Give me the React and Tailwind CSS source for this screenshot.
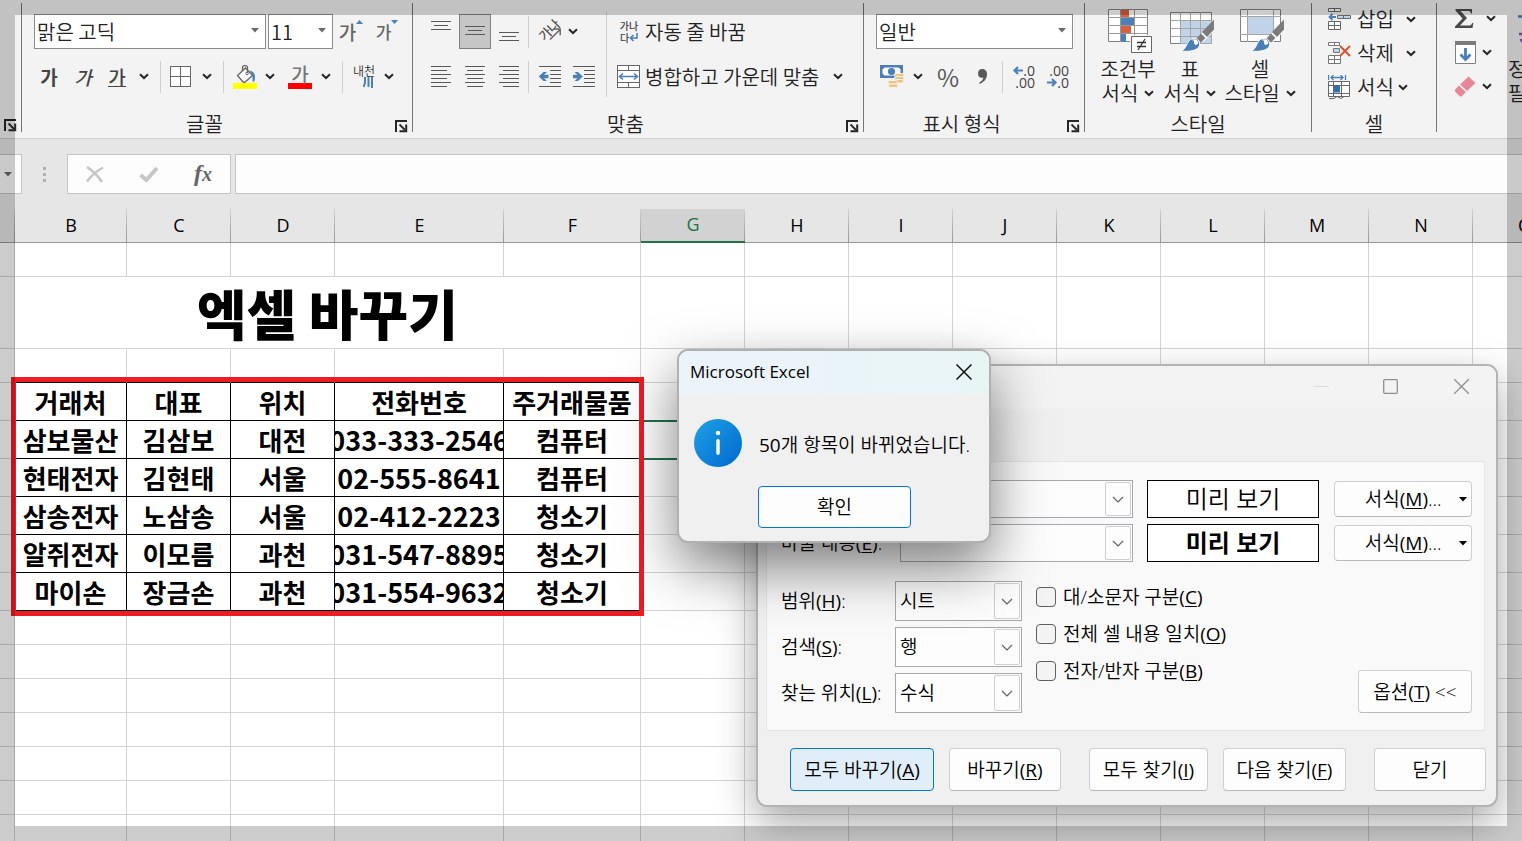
import { clsx } from 'clsx'

const COLUMNS = [
  { id: 'A', width: 'w-[15px]' },
  { id: 'B', width: 'w-[112px]' },
  { id: 'C', width: 'w-[104px]' },
  { id: 'D', width: 'w-[104px]' },
  { id: 'E', width: 'w-[169px]' },
  { id: 'F', width: 'w-[137px]' },
  ...['G', 'H', 'I', 'J', 'K', 'L', 'M', 'N', 'O', 'P'].map((id) => ({ id, width: 'w-[104px]' })),
]

const HEADINGS = ['거래처', '대표', '위치', '전화번호', '주거래물품']

const RECORDS = [
  ['삼보물산', '김삼보', '대전', '033-333-2546', '컴퓨터'],
  ['현태전자', '김현태', '서울', '02-555-8641', '컴퓨터'],
  ['삼송전자', '노삼송', '서울', '02-412-2223', '청소기'],
  ['알쥐전자', '이모름', '과천', '031-547-8895', '청소기'],
  ['마이손', '장금손', '과천', '031-554-9632', '청소기'],
]

/* ---------- small shared pieces ---------- */

function ChevronMark() {
  return (
    <svg className="shrink-0" width="10" height="7" viewBox="0 0 10 7" fill="none" stroke="#262626" strokeWidth="2">
      <path d="M1 1.200 5 5l4-3.800" />
    </svg>
  )
}

function Chevron() {
  return (
    <button aria-label="더 보기" className="flex w-5 shrink-0 justify-center">
      <ChevronMark />
    </button>
  )
}

function Tool({ label, className, children }) {
  return (
    <button aria-label={label} className={clsx('flex h-[35px] shrink-0 items-center justify-center', className)}>
      {children}
    </button>
  )
}

function Divider() {
  return (
    <div className="flex w-[13px] shrink-0 justify-center">
      <div className="h-8 w-px bg-[#cfcfcf]" />
    </div>
  )
}

function Combo({ label, value, className }) {
  return (
    <div className={clsx('relative h-[35px] shrink-0', className)}>
      <select
        aria-label={label}
        className="h-full w-full appearance-none border border-[#8c8c8c] bg-white pl-[2px] text-xl text-[#222]"
      >
        <option>{value}</option>
      </select>
      <svg className="pointer-events-none absolute top-[14px] right-[7px]" width="8" height="5" viewBox="0 0 8 5">
        <path d="M0 0h8L4 4.500z" fill="#6a6a6a" />
      </svg>
    </div>
  )
}

function Launcher() {
  return (
    <button aria-label="대화 상자 열기" className="flex shrink-0">
      <svg width="13" height="13" viewBox="0 0 13 13" fill="none" stroke="#262626">
        <path d="M1 12V1h11" strokeWidth="2" />
        <path d="M4.500 4.500 10 10" strokeWidth="1.800" />
        <path d="M11.200 4.500v6.800H4.500" strokeWidth="2" />
      </svg>
    </button>
  )
}

function Group({ title, launcher, className, children }) {
  return (
    <section className={clsx('flex h-[138px] shrink-0 flex-col', className)}>
      {children}
      <div className="mt-auto mb-[2px] flex h-6 items-center">
        <span className={clsx('flex-1 text-center leading-6', launcher && 'pr-2')}>{title}</span>
        {launcher && (
          <div className="mr-1 pt-1">
            <Launcher />
          </div>
        )}
      </div>
    </section>
  )
}

function GroupLine() {
  return <div className="mt-[3px] h-[129px] w-px shrink-0 bg-[#757575]" />
}

/* ---------- ribbon icons ---------- */

function Lines({ rows, width = 20, height = 22, align = 'left' }) {
  return (
    <svg width={width} height={height} viewBox={`0 0 ${width} ${height}`} stroke="#595959" shapeRendering="crispEdges">
      {rows.map(([y, w]) => {
        const x = align === 'left' ? 0 : align === 'right' ? width - w : (width - w) / 2
        return <line key={y} x1={x} x2={x + w} y1={y + 0.5} y2={y + 0.5} />
      })}
    </svg>
  )
}

const PARAGRAPH = [[0, 20], [4, 16], [8, 20], [12, 16], [16, 20], [20, 16]]

function IndentIcon({ inward }) {
  return (
    <svg width="22" height="22" viewBox="0 0 22 22" fill="none" stroke="#595959">
      <path d="M0 .5h22M11 4.500h11M11 8.500h11M11 12.500h11M11 16.500h11M0 20.500h22" shapeRendering="crispEdges" />
      {inward
        ? <path d="M0 8.800h4.500L1.500 6H5l4.800 4.500L5 15H1.500l3-2.800H0z" fill="#4a7fb8" stroke="none" />
        : <path d="M9.500 8.800H5L8 6H4.500L-.3 10.500 4.500 15H8l-3-2.800h4.500z" fill="#4a7fb8" stroke="none" />}
    </svg>
  )
}

function BordersIcon() {
  return (
    <svg width="21" height="21" viewBox="0 0 21 21" fill="#fff" stroke="#666" shapeRendering="crispEdges">
      <path d="M.5.5h20v20H.5zM10.500 0v21M0 10.500h21" />
    </svg>
  )
}

function FillIcon() {
  return (
    <svg width="24" height="24" viewBox="0 0 24 24" fill="none">
      <path d="M4.500 10.500 12.500 3l7 7.500-8.500 7.500z" fill="#fff" stroke="#666" strokeWidth="1.300" />
      <path d="M9.500 6V2.500C9.500 0 14.500 0 14.500 2.500V8" stroke="#666" strokeWidth="1.300" />
      <circle cx="14" cy="8.500" r="1.300" stroke="#666" />
      <path d="M16.500 5.500c5 1 6.500 5 5 10.500-.8 1-1.600 1-2-.5.500-4-.3-7-3-10z" fill="#4a7fb8" />
      <path d="M0 18h24v6H0z" fill="#ff0" />
    </svg>
  )
}

function MergeIcon() {
  return (
    <svg className="shrink-0" width="24" height="24" viewBox="0 0 24 24" fill="#fff" stroke="#666">
      <path d="M.5.5h22v22H.5zM0 5.500h23M0 17.500h23M11.500 1v4.500M11.500 17.500v5" shapeRendering="crispEdges" />
      <path d="M3 11.500h17M6 8.500l-3.500 3L6 14.500M17 8.500l3.500 3-3.500 3" fill="none" stroke="#4a7fb8" strokeWidth="1.600" />
    </svg>
  )
}

function MoneyIcon() {
  return (
    <svg width="25" height="24" viewBox="0 0 25 24">
      <path d="M0 0h23v13H0z" fill="#4a7fb8" />
      <path d="M4.500 2.500h14l2 2v4l-2 2h-14l-2-2v-4z" fill="#fff" />
      <circle cx="11.500" cy="6.500" r="3.600" fill="#4a7fb8" />
      <g fill="#ecc37f" stroke="#f3f3f3">
        <rect x="14.500" y="8.500" width="9.500" height="3.500" rx="1.700" />
        <rect x="14.500" y="11.500" width="9.500" height="3.500" rx="1.700" />
        <rect x="14" y="14.500" width="9.500" height="3.500" rx="1.700" />
        <rect x="8" y="15.500" width="9.500" height="3.500" rx="1.700" />
        <rect x="8.500" y="19" width="9.500" height="3.500" rx="1.700" />
      </g>
    </svg>
  )
}

function Brush() {
  return (
    <>
      <path d="M44 12v10L33 33l-5-5z" fill="#fff" />
      <path d="M44 10.500V20.500l-7 7.500-5-5z" fill="#7b7b7b" />
      <path d="M31 24.500 35.500 29l-4.500 4.500-4.500-4z" fill="#7b7b7b" />
      <path d="M11 42c6-2 5-9 10-12 5-2.500 10 2 8.500 6.500C28 42 18 43 11 42z" fill="#4a7fb8" stroke="#fff" />
      <path d="M21 31c3-1.800 7.500-.5 7.500 3-3 4-5 1-4.500-2-1-.8-2-.9-3-1z" fill="#fff" />
    </>
  )
}

function ConditionalIcon() {
  return (
    <svg className="ml-1" width="44" height="44" viewBox="0 0 44 44">
      <path d="M.5.500h39v32H.5z" fill="#fff" stroke="#808080" />
      <path d="M0 8.500h40M0 16.500h40M0 24.500h40M12.500 0v33M26.500 0v33" stroke="#999" />
      <path d="M13 1h8v7h-8zM13 17h10v7H13z" fill="#d6603f" />
      <path d="M13 9h13v7H13zM13 25h5v8h-5z" fill="#4a7fb8" />
      <path d="M22 26h22v18H22z" fill="#f3f3f3" />
      <path d="M23.500 27.500h20v16h-20z" fill="#fff" stroke="#666" />
      <path d="M29 33.500h9M29 37.500h9M37 30l-7 11" stroke="#333" strokeWidth="1.300" />
    </svg>
  )
}

function TableStyleIcon() {
  return (
    <svg className="ml-1" width="45" height="44" viewBox="0 0 45 44">
      <path d="M.5 3.500h41v31H.5z" fill="#fff" stroke="#808080" />
      <path d="M10.500 11.500h31v23h-31z" fill="#c0d3e8" />
      <path d="M0 11.500h42M0 19.500h42M0 27.500h42M10.500 3v32M20.500 3v32M30.500 3v32" stroke="#a5a5a5" fill="none" />
      <Brush />
    </svg>
  )
}

function CellStyleIcon() {
  return (
    <svg className="ml-1" width="45" height="44" viewBox="0 0 45 44">
      <path d="M.5.500h40v32H.5z" fill="#fff" stroke="#808080" />
      <path d="M7.500 7.500h26v18h-26z" fill="#c0d3e8" />
      <path d="M0 7.500h41M0 25.500h41M7.500 0v33M33.500 0v33" stroke="#a5a5a5" />
      <Brush />
    </svg>
  )
}

function InsertIcon() {
  return (
    <svg className="shrink-0" width="23" height="22" viewBox="0 0 23 22" fill="#fff" stroke="#666">
      <path d="M.5.500h12v3H.5zM6.500.500v3M.5 13.500h12v8H.5zM6.500 13.500v8M.5 17.500h12" />
      <path d="M9.500 7.500h13v3h-13zM15.500 7.500v3" fill="#c0d3e8" />
      <path d="M8 9H2M4.500 6 1.500 9l3 3" fill="none" stroke="#4a7fb8" strokeWidth="1.800" />
    </svg>
  )
}

function DeleteIcon() {
  return (
    <svg className="shrink-0" width="23" height="22" viewBox="0 0 23 22" fill="#fff" stroke="#777">
      <path d="M.5.500h11v3H.5zM6.500.500v3M.5 13.500h12v8H.5zM6.500 13.500v8M.5 17.500h12" />
      <path d="M5.500 6.500h6v4h-6z" fill="#c0d3e8" />
      <path d="m12 4 10 10M22 4 12 14" fill="none" stroke="#d6552f" strokeWidth="2" />
    </svg>
  )
}

function FormatIcon() {
  return (
    <svg className="shrink-0" width="23" height="24" viewBox="0 0 23 24" fill="#fff" stroke="#666">
      <path d="M.5 0v5M17.500 0v5M3 2.500h12M5.500 0 3 2.500 5.500 5M12.500 0 15 2.500 12.500 5" fill="none" stroke="#4a7fb8" strokeWidth="1.300" />
      <path d="M.5 6.500h21v15H.5zM.5 10.500h21M.5 18.500h21M5.500 6.500v15M13.500 6.500v15" />
      <path d="M6 10.500h6v7H6z" fill="#2f6fad" stroke="none" />
      <path d="M1 23.500h5l3-2 4 2 3-2" fill="none" />
    </svg>
  )
}

function FillDownIcon() {
  return (
    <svg width="21" height="23" viewBox="0 0 21 23">
      <path d="M.5.500h20v22H.5z" fill="#fff" stroke="#808080" />
      <path d="M0 0h21v4H0z" fill="#7b7b7b" />
      <path d="M10.500 7v11M5.500 13.500l5 5 5-5" fill="none" stroke="#4a7fb8" strokeWidth="2.800" />
    </svg>
  )
}

function EraserIcon() {
  return (
    <svg width="21" height="21" viewBox="0 0 21 21" fill="#e98596">
      <path d="M13.500.500 20.500 7 12 15 5 8.500z" />
      <path d="M4 9.500 11 16l-4.500 4.500H5L0 15.500v-2z" />
      <path d="m4.500 9 7 6.500" stroke="#f3f3f3" strokeWidth="1.200" />
    </svg>
  )
}

function BlueArrow({ right }) {
  return (
    <svg width="10" height="9" viewBox="0 0 10 9" fill="none" stroke="#4a7fb8" strokeWidth="2.200">
      {right ? <path d="M0 4.500h8M5 1l3.500 3.500L5 8" /> : <path d="M10 4.500H2M5 1 1.500 4.500 5 8" />}
    </svg>
  )
}

function Ribbon() {
  return (
    <header className="flex h-[139px] shrink-0 overflow-hidden border-b border-[#cfcfcf] bg-[#f3f3f3] text-xl text-[#222]">
      <div className="flex w-[21px] shrink-0 items-end pb-[6px] pl-1">
        <Launcher />
      </div>
      <GroupLine />

      <Group title="글꼴" launcher className="w-[390px]">
        <div className="mt-[14px] flex items-center pl-3">
          <Combo label="글꼴 이름" value="맑은 고딕" className="w-[232px]" />
          <Combo label="글꼴 크기" value="11" className="ml-[2px] w-[65px]" />
          <Tool label="글꼴 크게" className="w-9">
            <span className="text-[19px] leading-none font-medium text-[#666]">가</span>
            <svg className="mb-5" width="7" height="4" viewBox="0 0 7 4"><path d="M0 4h7L3.500 0z" fill="#4a7fb8" /></svg>
          </Tool>
          <Tool label="글꼴 작게" className="w-9">
            <span className="text-[17px] leading-none font-medium text-[#666]">가</span>
            <svg className="mb-5" width="7" height="4" viewBox="0 0 7 4"><path d="M0 0h7L3.500 4z" fill="#4a7fb8" /></svg>
          </Tool>
        </div>
        <div className="mt-[10px] flex items-center pl-[10px] text-[19px] leading-none text-[#444]">
          <Tool label="굵게" className="w-[34px] font-bold">가</Tool>
          <Tool label="기울임꼴" className="w-[34px] font-medium italic">가</Tool>
          <Tool label="밑줄" className="w-[34px] font-medium">
            <span className="border-b border-[#444]">가</span>
          </Tool>
          <Chevron />
          <Divider />
          <Tool label="테두리" className="w-[26px]"><BordersIcon /></Tool>
          <div className="ml-1"><Chevron /></div>
          <Divider />
          <Tool label="채우기 색" className="w-[30px]"><FillIcon /></Tool>
          <Chevron />
          <Tool label="글꼴 색" className="w-9 pl-1">
            <span className="flex w-6 flex-col items-center border-b-[6px] border-[#f00] font-medium text-[#777]">가</span>
          </Tool>
          <Chevron />
          <Divider />
          <Tool label="윗주 필드" className="w-[30px] flex-col">
            <span className="text-xs leading-3 text-[#333]">내천</span>
            <svg className="ml-2" width="10" height="11" viewBox="0 0 10 11" fill="none" stroke="#4a7fb8" strokeWidth="2">
              <path d="M2 0v6L.5 10M5.500 0v10M9 0v11" />
            </svg>
          </Tool>
          <Chevron />
        </div>
      </Group>
      <GroupLine />

      <Group title="맞춤" launcher className="w-[450px]">
        <div className="mt-3 flex">
          <div className="flex w-[193px] shrink-0 flex-col gap-[10px] pt-[2px] pl-[11px]">
            <div className="flex items-center">
              <Tool label="위쪽 맞춤" className="w-[34px]"><Lines align="center" rows={[[0, 20], [4, 14], [8, 20]]} /></Tool>
              <Tool label="가운데 맞춤" className="mx-px w-8 border border-[#808080] bg-[#c6c6c6]">
                <Lines align="center" rows={[[5, 20], [9, 14], [13, 20]]} />
              </Tool>
              <Tool label="아래쪽 맞춤" className="w-[34px]"><Lines align="center" rows={[[11, 20], [15, 14], [19, 20]]} /></Tool>
              <div className="-ml-1"><Divider /></div>
              <Tool label="방향" className="w-[28px] flex-col">
                <span className="-rotate-45 text-[13px] leading-[13px] font-medium text-[#555]">가나</span>
                <svg className="-mt-2 ml-3" width="12" height="12" viewBox="0 0 12 12" fill="none" stroke="#666" strokeWidth="1.500">
                  <path d="M1 11.500 11 1.500M5 1h6.200v6.200" />
                </svg>
              </Tool>
              <Chevron />
            </div>
            <div className="flex items-center">
              <Tool label="왼쪽 맞춤" className="w-[34px]"><Lines rows={PARAGRAPH} /></Tool>
              <Tool label="가로 가운데 맞춤" className="w-[34px]"><Lines rows={PARAGRAPH} align="center" /></Tool>
              <Tool label="오른쪽 맞춤" className="w-[34px]"><Lines rows={PARAGRAPH} align="right" /></Tool>
              <div className="-ml-1"><Divider /></div>
              <Tool label="내어쓰기" className="w-[30px]"><IndentIcon /></Tool>
              <Tool label="들여쓰기" className="w-[38px]"><IndentIcon inward /></Tool>
            </div>
          </div>
          <div className="h-[85px] w-px shrink-0 bg-[#cfcfcf]" />
          <div className="flex flex-col gap-[10px] pt-[2px] pl-[10px]">
            <button className="flex h-[35px] items-center gap-1 whitespace-nowrap">
              <span className="flex w-6 flex-col items-center text-[10px] leading-3 font-medium text-[#444]">
                <span>가나</span>
                <span className="flex items-center">
                  다
                  <svg width="9" height="9" viewBox="0 0 9 9" fill="none" stroke="#4a7fb8" strokeWidth="1.600">
                    <path d="M8 0v5H2M4.500 2 1.500 5l3 3" />
                  </svg>
                </span>
              </span>
              자동 줄 바꿈
            </button>
            <div className="flex h-[35px] items-center">
              <button className="flex items-center gap-1 whitespace-nowrap">
                <MergeIcon />
                병합하고 가운데 맞춤
              </button>
              <div className="ml-2"><Chevron /></div>
            </div>
          </div>
        </div>
      </Group>
      <GroupLine />

      <Group title="표시 형식" launcher className="w-[220px]">
        <div className="mt-[14px] pl-3">
          <Combo label="표시 형식" value="일반" className="w-[197px]" />
        </div>
        <div className="mt-[10px] flex items-center pl-3">
          <Tool label="회계 표시 형식" className="w-8"><MoneyIcon /></Tool>
          <Chevron />
          <Tool label="백분율" className="w-10 text-2xl leading-none font-normal text-[#595959]">%</Tool>
          <Tool label="쉼표 스타일" className="w-7">
            <svg width="9" height="15" viewBox="0 0 9 15" fill="#595959">
              <path d="M4 0c3 0 5 2 5 5 0 5-3 8-7.500 10v-1.500C4 12 5.200 10.500 5.200 8.500 2 9.500 0 7.500 0 4.500 0 2 1.500 0 4 0z" />
            </svg>
          </Tool>
          <Divider />
          <Tool label="자릿수 늘림" className="w-[34px] flex-col items-end pr-2 font-[Open_Sans] text-sm leading-3 font-normal text-[#444]">
            <span className="flex items-center"><BlueArrow />.0</span>
            <span>.00</span>
          </Tool>
          <Tool label="자릿수 줄임" className="w-[34px] flex-col items-end pr-2 font-[Open_Sans] text-sm leading-3 font-normal text-[#444]">
            <span>.00</span>
            <span className="flex items-center"><BlueArrow right />.0</span>
          </Tool>
        </div>
      </Group>
      <GroupLine />

      <Group title="스타일" className="w-[226px]">
        <div className="mt-[9px] flex pl-3 leading-6">
          <button className="flex w-[62px] flex-col items-center">
            <ConditionalIcon />
            <span className="mt-1">조건부</span>
            <span className="flex items-center gap-[6px] whitespace-nowrap">서식 <ChevronMark /></span>
          </button>
          <button className="flex w-[62px] flex-col items-center">
            <TableStyleIcon />
            <span className="mt-1">표</span>
            <span className="flex items-center gap-[6px] whitespace-nowrap">서식 <ChevronMark /></span>
          </button>
          <button className="flex w-[78px] flex-col items-center">
            <CellStyleIcon />
            <span className="mt-1">셀</span>
            <span className="flex items-center gap-[6px] whitespace-nowrap">스타일 <ChevronMark /></span>
          </button>
        </div>
      </Group>
      <GroupLine />

      <Group title="셀" className="w-[124px]">
        <div className="mt-[2px] flex flex-col pl-4 whitespace-nowrap">
          <div className="flex h-[34px] items-center">
            <button className="flex w-[73px] items-center gap-[6px]"><InsertIcon />삽입</button>
            <Chevron />
          </div>
          <div className="flex h-[34px] items-center">
            <button className="flex w-[73px] items-center gap-[6px]"><DeleteIcon />삭제</button>
            <Chevron />
          </div>
          <div className="flex h-[34px] items-center">
            <button className="flex w-[65px] items-center gap-[6px]"><FormatIcon />서식</button>
            <Chevron />
          </div>
        </div>
      </Group>
      <GroupLine />

      <div className="flex w-[68px] shrink-0 flex-col pt-[1px] pl-[18px]">
        <div className="flex h-[34px] items-center">
          <button aria-label="자동 합계" className="flex w-[26px]">
            <svg width="19" height="19" viewBox="0 0 19 19" fill="#4a4a4a">
              <path d="M.5 0h16.500v4.500h-1C15.500 2.500 14.500 2 13 2H5.500L12 9 5 16.500h8.500c2 0 3-.6 3.800-2.500h1L17.500 19H0v-1.500L7.500 9.500.5 1.500z" />
            </svg>
          </button>
          <Chevron />
        </div>
        <div className="flex h-[34px] items-center">
          <button aria-label="채우기" className="flex w-[22px]"><FillDownIcon /></button>
          <Chevron />
        </div>
        <div className="flex h-[34px] items-center">
          <button aria-label="지우기" className="flex w-[22px]"><EraserIcon /></button>
          <Chevron />
        </div>
      </div>
      <button className="flex shrink-0 flex-col items-start pl-[3px] leading-6 whitespace-nowrap">
        <svg className="mt-[9px] ml-2" width="40" height="44" viewBox="0 0 40 44" fill="none" strokeWidth="2.500">
          <path d="M2 7.500h14" stroke="#4a7fb8" />
          <path d="M3 25h12M5 30c0 3 4 4 8 4" stroke="#8a55a8" />
        </svg>
        <span className="mt-1">정렬 및</span>
        <span>필터</span>
      </button>
    </header>
  )
}

/* ---------- formula bar and sheet ---------- */

function FormulaBar() {
  return (
    <div className="flex h-[70px] shrink-0 bg-[#e6e6e6] pt-[15px]">
      <button aria-label="이름 상자" className="flex h-10 w-[22px] shrink-0 items-center border border-l-0 border-[#c6c6c6] bg-[#fdfdfd] pl-1">
        <svg width="8" height="5" viewBox="0 0 8 5"><path d="M0 0h8L4 4.500z" fill="#6a6a6a" /></svg>
      </button>
      <div className="flex h-10 w-[45px] shrink-0 flex-col items-center justify-center gap-[3px]">
        <span className="size-[3px] bg-[#b0b0b0]" />
        <span className="size-[3px] bg-[#b0b0b0]" />
        <span className="size-[3px] bg-[#b0b0b0]" />
      </div>
      <div className="flex h-10 w-[164px] shrink-0 border border-[#c6c6c6] bg-[#fdfdfd]">
        <button aria-label="취소" className="flex flex-1 items-center justify-center">
          <svg width="18" height="17" viewBox="0 0 18 17" fill="none" stroke="#c6c6c6" strokeWidth="2.600">
            <path d="M1 1c6 4 11 9 15 15M17 1.500C11 5 5 10 1 15.500" />
          </svg>
        </button>
        <button aria-label="입력" className="flex flex-1 items-center justify-center">
          <svg width="20" height="17" viewBox="0 0 20 17" fill="none" stroke="#c6c6c6" strokeWidth="4">
            <path d="M1.500 9 7.500 14 18 2" />
          </svg>
        </button>
        <button aria-label="함수 삽입" className="flex flex-1 items-center justify-center font-[Liberation_Serif] text-2xl leading-none font-bold text-[#666] italic">
          <span>f<span className="text-xl">x</span></span>
        </button>
      </div>
      <input aria-label="수식 입력줄" className="ml-1 h-10 min-w-0 flex-1 border border-r-0 border-[#c6c6c6] bg-[#fdfdfd] px-2" />
    </div>
  )
}

function BlankCells({ from, to, className }) {
  return COLUMNS.slice(from, to).map((col) => (
    <td key={col.id} className={clsx('border-r border-b', className || 'border-[#d4d4d4]')} />
  ))
}

function BlankRow() {
  return (
    <tr className="h-[34px]">
      <BlankCells from={0} />
    </tr>
  )
}

function DataRow({ cells, selected, heading }) {
  const Cell = heading ? 'th' : 'td'
  return (
    <tr className="h-[38px]">
      <BlankCells from={0} to={1} />
      {cells.map((text, i) => (
        <Cell key={i} className="border-r border-b border-black p-0 font-bold text-black">
          <div className={clsx('flex justify-center overflow-hidden leading-9 whitespace-nowrap', i === 3 && !heading ? 'text-[27px]' : 'text-[26px]')}>
            {text}
          </div>
        </Cell>
      ))}
      <td className={clsx('border-r border-b border-[#d4d4d4]', selected && 'outline-2 -outline-offset-1 outline-[#217346]')} />
      <BlankCells from={7} />
    </tr>
  )
}

function Sheet() {
  return (
    <main className="relative min-h-0 flex-1 overflow-hidden bg-white">
      <table className="w-[1681px] table-fixed border-separate border-spacing-0">
        <colgroup>
          {COLUMNS.map((col) => <col key={col.id} className={col.width} />)}
        </colgroup>
        <thead>
          <tr className="h-[34px] font-[Open_Sans] text-lg text-black">
            {COLUMNS.map((col) => (
              <th
                key={col.id}
                className={clsx(
                  'relative p-0 pb-[2px] leading-none font-normal',
                  col.id === 'G' ? 'border-b-2 border-[#217346] bg-[#d2d2d2] text-[#217346]' : 'border-b border-[#999] bg-[#e6e6e6]',
                )}
              >
                {col.id !== 'A' && col.id}
                <span className="absolute inset-y-0 right-0 w-px bg-linear-to-b from-[#d0d0d0] to-[#999]" />
              </th>
            ))}
          </tr>
        </thead>
        <tbody>
          <BlankRow />
          <tr className="h-[72px]">
            <BlankCells from={0} to={1} />
            <td colSpan={5} className="border-r border-b border-[#d4d4d4] p-0 text-center text-[54px] leading-[70px] font-black text-black">
              엑셀 바꾸기
            </td>
            <BlankCells from={6} />
          </tr>
          <tr className="h-[34px]">
            <BlankCells from={0} to={1} />
            <BlankCells from={1} to={6} className="border-r-[#d4d4d4] border-b-black" />
            <BlankCells from={6} />
          </tr>
          <DataRow cells={HEADINGS} heading />
          {RECORDS.map((cells, i) => <DataRow key={cells[0]} cells={cells} selected={i === 0} />)}
          {Array.from({ length: 12 }).map((_, i) => <BlankRow key={i} />)}
        </tbody>
      </table>
      <div className="pointer-events-none absolute top-[168px] left-[11px] h-[239px] w-[633px] border-[5px] border-[#ed1c24]" />
    </main>
  )
}

/* ---------- dialogs ---------- */

function DropSelect({ id, label, value, className }) {
  return (
    <div className={clsx('relative shrink-0', className)}>
      <select id={id} aria-label={label} className="h-full w-full appearance-none border border-[#a6a8ab] bg-[#fdfdfd] pl-1">
        <option>{value}</option>
      </select>
      <span className="pointer-events-none absolute inset-y-[2px] right-[2px] flex w-[26px] items-center justify-center rounded-xs border border-[#cfcfcf]">
        <svg width="12" height="7" viewBox="0 0 12 7" fill="none" stroke="#606060" strokeWidth="1.200">
          <path d="m1 1 5 5 5-5" />
        </svg>
      </span>
    </div>
  )
}

function Key({ children }) {
  return <span className="font-normal">(<u className="underline-offset-2">{children}</u>)</span>
}

function PushButton({ className, children }) {
  return (
    <button className={clsx('h-[43px] shrink-0 rounded-[4px] border whitespace-nowrap', className)}>
      {children}
    </button>
  )
}

const PLAIN = 'border-[#cfcfcf] border-b-[#bababa] bg-[#fdfdfd]'

function ReplaceRow({ label, hotkey, name, bold }) {
  return (
    <div className="flex h-[38px] items-center">
      <div className="w-[119px] whitespace-nowrap">
        {label && <label htmlFor={name}>{label}<Key>{hotkey}</Key>:</label>}
      </div>
      <DropSelect id={name} label={label ? undefined : '찾을 내용'} value="" className="h-[38px] w-[233px]" />
      <div
        className={clsx(
          'ml-[14px] flex h-[38px] w-[173px] items-center justify-center border border-black bg-white text-2xl',
          bold && 'font-bold',
        )}
      >
        미리 보기
      </div>
      <button className={clsx('relative ml-[15px] h-9 w-[138px] rounded-[4px] border', PLAIN)}>
        서식<Key>M</Key>...
        <svg className="absolute top-[15px] right-1" width="8" height="5" viewBox="0 0 8 5"><path d="M0 0h8L4 4.500z" /></svg>
      </button>
    </div>
  )
}

const OPTIONS = [
  { id: 'within', label: '범위', hotkey: 'H', value: '시트' },
  { id: 'search', label: '검색', hotkey: 'S', value: '행' },
  { id: 'look-in', label: '찾는 위치', hotkey: 'L', value: '수식' },
]

const CHECKS = [
  { id: 'case', label: '대/소문자 구분', hotkey: 'C' },
  { id: 'whole', label: '전체 셀 내용 일치', hotkey: 'O' },
  { id: 'width', label: '전자/반자 구분', hotkey: 'B' },
]

function ReplaceDialog() {
  return (
    <section className="absolute top-[364px] left-[756px] w-[742px] overflow-hidden rounded-[11px] border-2 border-[#b3b3b3] bg-[#f0f0f0] font-[Open_Sans,Noto_Sans_CJK_KR,sans-serif] text-[19px] leading-6 text-black shadow-[0_16px_40px_rgba(0,0,0,0.35)]">
      <div className="flex h-[43px] items-center justify-end bg-[#f3f3f3] pr-[27px] pb-[2px] text-[#8f8f8f]">
        <button aria-label="최소화" className="w-[15px]">
          <svg width="15" height="2" viewBox="0 0 15 2"><path d="M0 .5h15" stroke="#dcdcdc" /></svg>
        </button>
        <button aria-label="최대화" className="ml-[54px] w-[15px]">
          <svg width="15" height="15" viewBox="0 0 15 15" fill="none" stroke="currentColor" strokeWidth="1.300">
            <rect x=".7" y=".7" width="13.600" height="13.600" rx="1" />
          </svg>
        </button>
        <button aria-label="닫기" className="ml-14 w-[15px]">
          <svg width="15" height="15" viewBox="0 0 15 15" fill="none" stroke="currentColor" strokeWidth="1.300">
            <path d="m0 0 15 15M15 0 0 15" />
          </svg>
        </button>
      </div>

      <div className="mt-[52px] mr-[11px] ml-2 border border-[#e5e5e5] bg-[#f9f9f9] pt-[18px] pr-3 pb-[17px] pl-[14px]">
        <div className="flex flex-col gap-[6px]">
          <ReplaceRow name="find-what" />
          <ReplaceRow name="replace-with" label="바꿀 내용" hotkey="E" bold />
        </div>
        <div className="mt-[19px] flex">
          <div className="flex flex-col gap-[6px]">
            {OPTIONS.map((opt) => (
              <div key={opt.id} className="flex h-10 items-center">
                <label htmlFor={opt.id} className="w-[114px]">{opt.label}<Key>{opt.hotkey}</Key>:</label>
                <DropSelect id={opt.id} value={opt.value} className="h-10 w-[127px]" />
              </div>
            ))}
          </div>
          <div className="ml-[14px] flex flex-col gap-[13px] pt-1">
            {CHECKS.map((check) => (
              <div key={check.id} className="flex h-6 items-center gap-[7px] whitespace-nowrap">
                <input id={check.id} type="checkbox" className="size-5 shrink-0 appearance-none rounded-[4px] border border-[#5f5f5f] bg-[#f3f3f3]" />
                <label htmlFor={check.id}>{check.label}<Key>{check.hotkey}</Key></label>
              </div>
            ))}
          </div>
          <PushButton className={clsx('ml-auto w-[114px] self-end', PLAIN)}>옵션<Key>T</Key> &lt;&lt;</PushButton>
        </div>
      </div>

      <div className="flex pt-[17px] pr-[10px] pb-[14px] pl-8">
        <PushButton className="w-36 border-[#0078d4] bg-[#e0eef9]">모두 바꾸기<Key>A</Key></PushButton>
        <PushButton className={clsx('ml-[15px] w-28', PLAIN)}>바꾸기<Key>R</Key></PushButton>
        <PushButton className={clsx('ml-7 w-[119px]', PLAIN)}>모두 찾기<Key>I</Key></PushButton>
        <PushButton className={clsx('ml-[15px] w-[123px]', PLAIN)}>다음 찾기<Key>F</Key></PushButton>
        <PushButton className={clsx('ml-7 w-28', PLAIN)}>닫기</PushButton>
      </div>
    </section>
  )
}

function MessageBox() {
  return (
    <section className="absolute top-[349px] left-[677px] w-[314px] overflow-hidden rounded-[11px] border-2 border-[#b0b0b0] bg-[#f0f0f0] font-[Open_Sans,Noto_Sans_CJK_KR,sans-serif] text-[19px] text-black shadow-[0_24px_56px_rgba(0,0,0,0.5)]">
      <div className="flex h-[43px] items-center justify-between bg-linear-to-r from-[#ebf3fb] to-[#e8f5f5] pr-[17px] pb-[2px] pl-[11px]">
        <h2 className="text-[17px] font-normal">Microsoft Excel</h2>
        <button aria-label="닫기">
          <svg width="16" height="16" viewBox="0 0 16 16" fill="none" stroke="#111" strokeWidth="1.500">
            <path d="m.5.500 15 15M15.500.500l-15 15" />
          </svg>
        </button>
      </div>
      <div className="flex items-center gap-[17px] pt-[25px] pl-[15px] whitespace-nowrap">
        <svg className="shrink-0" width="48" height="48" viewBox="0 0 48 48">
          <defs>
            <linearGradient id="info" x1="0" y1="0" x2="1" y2="1">
              <stop offset="0" stopColor="#1ea2e4" />
              <stop offset="1" stopColor="#0067cf" />
            </linearGradient>
          </defs>
          <circle cx="24" cy="24" r="24" fill="url(#info)" />
          <circle cx="24" cy="14" r="2.200" fill="#fff" />
          <rect x="22.300" y="20" width="3.400" height="16" rx="1.700" fill="#fff" />
        </svg>
        <p className="pt-1"><span className="font-normal">50</span>개 항목이 바뀌었습니다.</p>
      </div>
      <button className="mt-[19px] mb-[13px] ml-[79px] block h-[42px] w-[153px] rounded-[4px] border border-[#0078d4] bg-[#fdfdfd]">
        확인
      </button>
    </section>
  )
}

export default function App() {
  return (
    <div className="relative flex h-screen flex-col overflow-hidden bg-white font-[Noto_Sans_CJK_KR,sans-serif] font-[350]">
      <Ribbon />
      <FormulaBar />
      <Sheet />
      <ReplaceDialog />
      <MessageBox />
      <div className="pointer-events-none absolute inset-0 border-[15px] border-black/20" />
    </div>
  )
}
